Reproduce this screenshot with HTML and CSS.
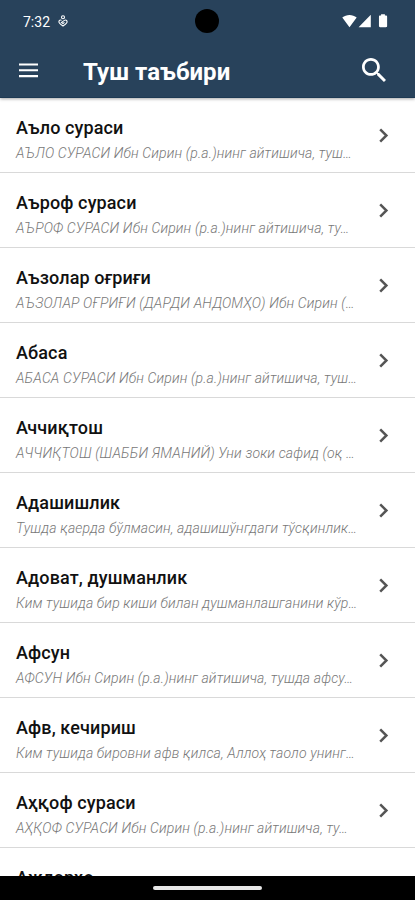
FILE: index.html
```html
<!DOCTYPE html>
<html lang="uz-Cyrl">
<head>
<meta charset="utf-8">
<meta name="viewport" content="width=device-width, initial-scale=1">
<title>Туш таъбири</title>
<link rel="stylesheet" href="styles.css">
</head>
<body>
<svg width="0" height="0" class="defs"><symbol id="chevron" viewBox="0 0 10 15"><path d="M1.2 1.3 7.4 7.5 1.2 13.7" fill="none" stroke="#555" stroke-width="2.5"/></symbol></svg>
<header class="top">
  <div class="status">
    <span class="clock">7:32</span>
    <svg class="notice" viewBox="0 0 10 12"><g fill="none" stroke="#fff" stroke-width="1.1"><circle cx="5" cy="2.2" r="1.5"/><path d="M3.6 5.4C2.4 4.6.9 5.3.9 6.7.9 8.2 3 9.6 5 11c2-1.4 4.1-2.8 4.1-4.3 0-1.4-1.5-2.1-2.7-1.3L3.5 7.4 5 8.5l1.5-1.1"/></g></svg>
    <span class="camera"></span>
    <svg class="signals" viewBox="0 0 46 14" fill="#fff"><path d="M.3 3.3C4.5-.3 11.1-.3 15.3 3.3L7.8 13zM30 .4V13H17.3zM38.7 1.3h2V0h4v1.3h1c.8 0 1.3.4 1.3 1.2v9.3c0 .8-.5 1.2-1.3 1.2h-6c-.8 0-1.2-.4-1.2-1.2V2.5c0-.8.4-1.2 1.2-1.2z" transform="translate(0 .3) scale(.96 1)"/></svg>
  </div>
  <div class="bar">
    <svg class="menu" viewBox="0 0 20 15" fill="#fff"><path d="M0 0h20v2.2H0zM0 6.1h20v2.2H0zM0 12.3h20v2.2H0z"/></svg>
    <h1>Туш таъбири</h1>
    <svg class="search" viewBox="3 3 17.5 17.5" fill="#fff"><path d="M15.5 14h-.79l-.28-.27C15.41 12.59 16 11.11 16 9.5 16 5.91 13.09 3 9.5 3S3 5.91 3 9.5 5.91 16 9.5 16c1.61 0 3.09-.59 4.23-1.57l.27.28v.79l5 4.99L20.49 19l-4.99-5zm-6 0C7.01 14 5 11.99 5 9.5S7.01 5 9.5 5 14 7.01 14 9.5 11.99 14 9.5 14z"/></svg>
  </div>
</header>
<main class="list">
  <article class="row"><div class="text"><h2>Аъло сураси</h2><p>АЪЛО СУРАСИ Ибн Сирин (р.а.)нинг айтишича, туш…</p></div><svg class="go"><use href="#chevron"/></svg></article>
  <article class="row"><div class="text"><h2>Аъроф сураси</h2><p>АЪРОФ СУРАСИ Ибн Сирин (р.а.)нинг айтишича, ту…</p></div><svg class="go"><use href="#chevron"/></svg></article>
  <article class="row"><div class="text"><h2>Аъзолар оғриғи</h2><p>АЪЗОЛАР ОҒРИҒИ (ДАРДИ АНДОМҲО) Ибн Сирин (…</p></div><svg class="go"><use href="#chevron"/></svg></article>
  <article class="row"><div class="text"><h2>Абаса</h2><p>АБАСА СУРАСИ Ибн Сирин (р.а.)нинг айтишича, туш…</p></div><svg class="go"><use href="#chevron"/></svg></article>
  <article class="row"><div class="text"><h2>Аччиқтош</h2><p>АЧЧИҚТОШ (ШАББИ ЯМАНИЙ) Уни зоки сафид (оқ …</p></div><svg class="go"><use href="#chevron"/></svg></article>
  <article class="row"><div class="text"><h2>Адашишлик</h2><p>Тушда қаерда бўлмасин, адашишўнгдаги тўсқинлик…</p></div><svg class="go"><use href="#chevron"/></svg></article>
  <article class="row"><div class="text"><h2>Адоват, душманлик</h2><p>Ким тушида бир киши билан душманлашганини кўр…</p></div><svg class="go"><use href="#chevron"/></svg></article>
  <article class="row"><div class="text"><h2>Афсун</h2><p>АФСУН Ибн Сирин (р.а.)нинг айтишича, тушда афсу…</p></div><svg class="go"><use href="#chevron"/></svg></article>
  <article class="row"><div class="text"><h2>Афв, кечириш</h2><p>Ким тушида бировни афв қилса, Аллоҳ таоло унинг…</p></div><svg class="go"><use href="#chevron"/></svg></article>
  <article class="row"><div class="text"><h2>Аҳқоф сураси</h2><p>АҲҚОФ СУРАСИ Ибн Сирин (р.а.)нинг айтишича, ту…</p></div><svg class="go"><use href="#chevron"/></svg></article>
  <article class="row"><div class="text"><h2>Аждарҳо</h2></div></article>
</main>
<footer class="nav"><span class="handle"></span></footer>
</body>
</html>
```
FILE: styles.css
```css
* { box-sizing: border-box; margin: 0; padding: 0; }
body {
  height: 900px;
  display: flex;
  flex-direction: column;
  overflow: hidden;
  background: #fff;
  font-family: Roboto, "Noto Sans", sans-serif;
}
.defs { position: absolute; }
svg { display: block; flex: none; }
.top {
  position: relative;
  z-index: 1;
  flex: none;
  height: 98px;
  background: #28425b;
  border-bottom: 1px solid #1d3953;
  box-shadow: 0 1px 3px rgba(0, 0, 0, .35);
  color: #fff;
}
.status { height: 42px; display: flex; align-items: center; padding: 0 27px 0 23px; }
.clock { width: 28px; font-size: 14px; line-height: 16px; margin-top: 1px; white-space: nowrap; }
.notice { width: 10px; height: 12px; margin-left: 7px; }
.camera { width: 24px; height: 24px; margin: 0 auto 1px 127px; border-radius: 50%; background: #000; }
.signals { width: 46px; height: 14px; }
.bar { height: 56px; display: flex; align-items: center; padding: 0 29px 0 19px; }
.menu { width: 19px; height: 15px; }
h1 { flex: 1; margin: 3px 0 0 45px; font-size: 24px; line-height: 28px; font-weight: 700; letter-spacing: .05px; white-space: nowrap; }
.search { width: 24px; height: 24px; }
.list { flex: 1; min-height: 0; overflow: hidden; }
.row {
  height: 75px;
  display: flex;
  align-items: center;
  justify-content: space-between;
  padding: 0 26px 0 16px;
  border-bottom: 1px solid #d9d9d9;
}
.text { width: 344px; height: 74px; padding-top: 19px; }
h2 { font-size: 18px; line-height: 22px; font-weight: 500; letter-spacing: .12px; color: #111; white-space: nowrap; }
p { margin-top: 5px; font-size: 14px; line-height: 18px; font-weight: 300; font-style: italic; letter-spacing: .14px; color: #777; white-space: nowrap; }
.go { width: 10px; height: 15px; }
.nav { flex: none; height: 24px; display: flex; align-items: center; justify-content: center; background: #000; }
.handle { width: 109px; height: 4px; border-radius: 2px; background: #e8e8e8; }
```
